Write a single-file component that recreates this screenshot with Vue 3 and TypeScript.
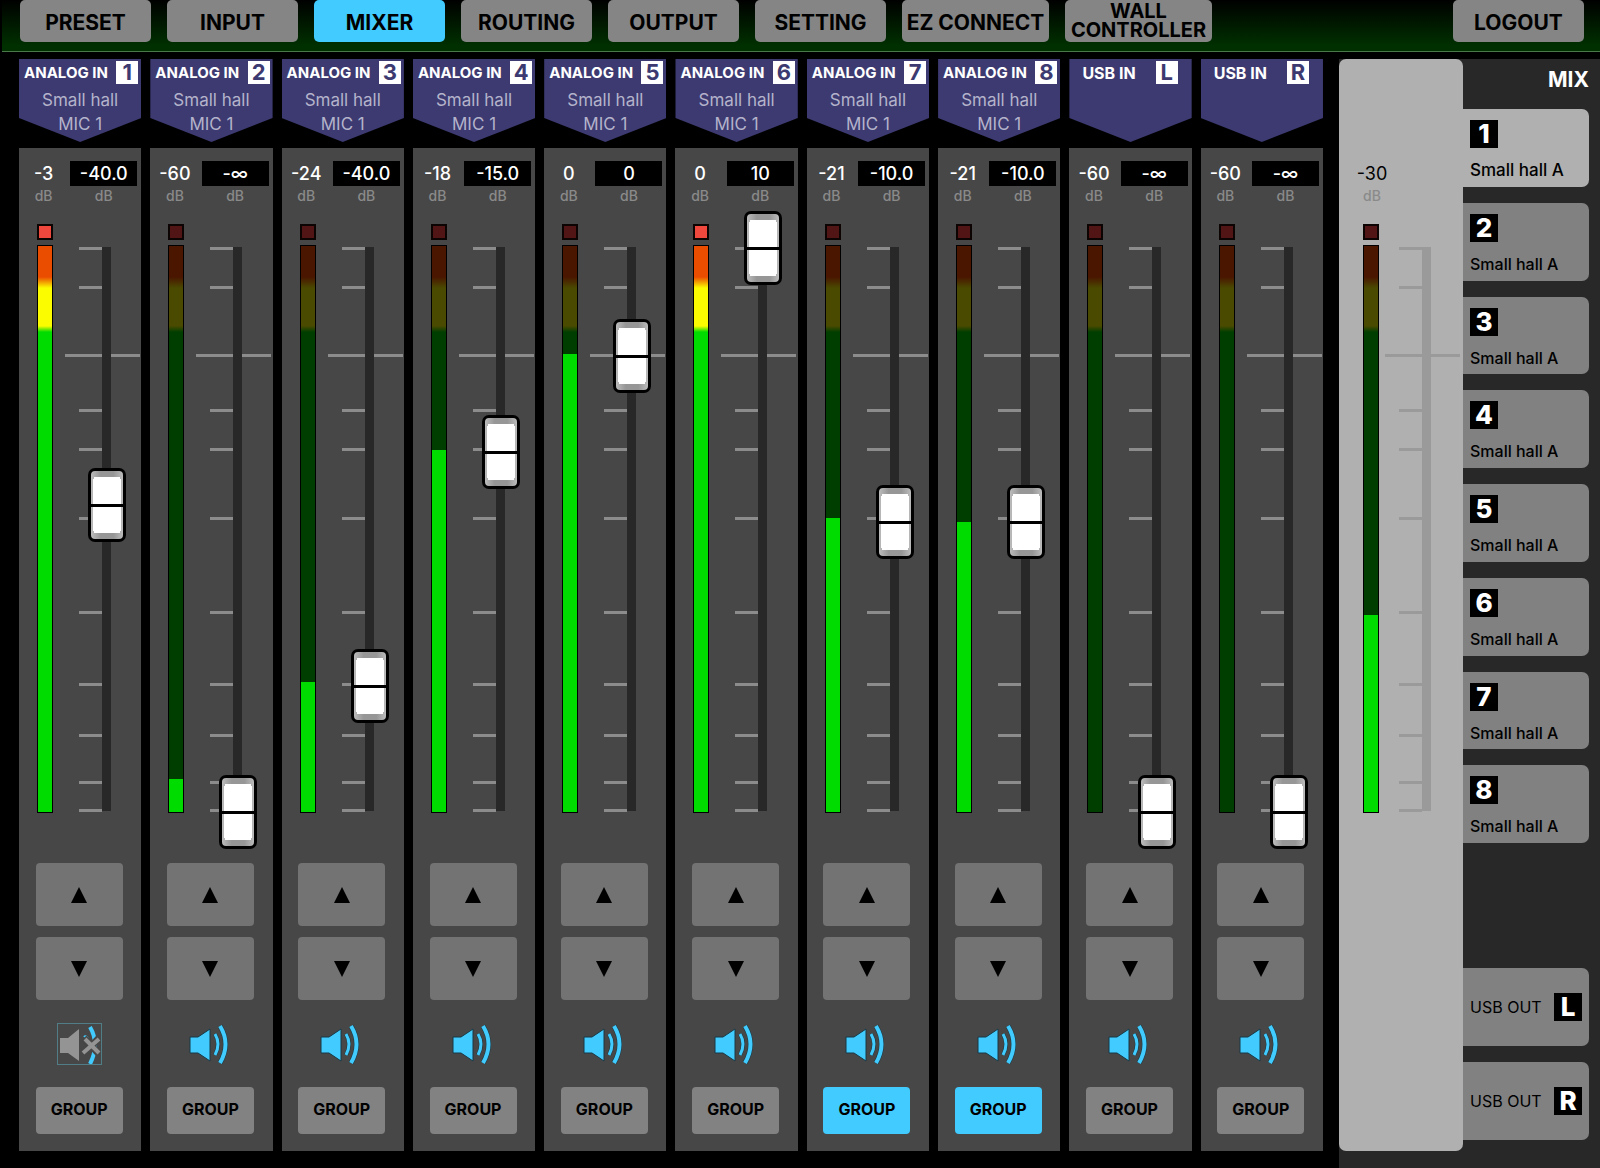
<script setup lang="ts">
import { ref } from 'vue'

interface Channel {
  id: string
  source: string
  badge: string
  name: string
  port: string
  level: string
  value: string
  clip: boolean
  lit: number
  fader: number
  muted: boolean
  grouped: boolean
}

const METER_HEIGHT = 566
const FADER_TRAVEL = 564

const tabs = [
  { label: 'PRESET', size: '' },
  { label: 'INPUT', size: '' },
  { label: 'MIXER', size: '' },
  { label: 'ROUTING', size: '' },
  { label: 'OUTPUT', size: '' },
  { label: 'SETTING', size: '' },
  { label: 'EZ CONNECT', size: 'wide' },
  { label: 'WALL CONTROLLER', size: 'wide two-line' },
]
const activeTab = ref('MIXER')

function analog(n: number, level: string, value: string, lit: number, fader: number, extra: Partial<Channel> = {}): Channel {
  return {
    id: `analog-${n}`, source: 'ANALOG IN', badge: String(n), name: 'Small hall', port: 'MIC 1',
    level, value, lit, fader, clip: false, muted: false, grouped: false, ...extra,
  }
}

function usb(side: string): Channel {
  return {
    id: `usb-${side}`, source: 'USB IN', badge: side, name: '', port: '',
    level: '-60', value: '-∞', lit: 0, fader: 0, clip: false, muted: false, grouped: false,
  }
}

const channels = ref<Channel[]>([
  analog(1, '-3', '-40.0', METER_HEIGHT, 307, { clip: true, muted: true }),
  analog(2, '-60', '-∞', 33, 0),
  analog(3, '-24', '-40.0', 130, 126),
  analog(4, '-18', '-15.0', 362, 360),
  analog(5, '0', '0', 458, 456),
  analog(6, '0', '10', METER_HEIGHT, 564, { clip: true }),
  analog(7, '-21', '-10.0', 294, 290, { grouped: true }),
  analog(8, '-21', '-10.0', 290, 290, { grouped: true }),
  usb('L'),
  usb('R'),
])

const mixes = [1, 2, 3, 4, 5, 6, 7, 8].map((n) => ({ n, name: 'Small hall A' }))
const activeMix = ref(1)
const outputs = ['L', 'R']

const shortTicks = [36, 75, 198, 237, 306, 400, 472, 523, 570, 598]

function nudge(ch: Channel, step: number) {
  ch.fader = Math.min(FADER_TRAVEL, Math.max(0, ch.fader + step))
}
</script>

<template>
  <div class="mixer">
    <header class="topbar">
      <nav class="tabs" aria-label="Sections">
        <button
          v-for="tab in tabs"
          :key="tab.label"
          type="button"
          class="tab"
          :class="[tab.size, { active: tab.label === activeTab }]"
          @click="activeTab = tab.label"
        >{{ tab.label }}</button>
      </nav>
      <button type="button" class="tab">LOGOUT</button>
    </header>

    <main class="desk">
      <section class="channels">
        <article v-for="ch in channels" :key="ch.id" class="channel">
          <div class="plate">
            <h2 class="plate-title" :class="{ usb: !ch.name }">
              <span>{{ ch.source }}</span>
              <span class="plate-badge">{{ ch.badge }}</span>
            </h2>
            <p class="plate-line">{{ ch.name }}</p>
            <p class="plate-line">{{ ch.port }}</p>
          </div>

          <div class="card">
            <div class="readouts">
              <span class="level">{{ ch.level }}</span>
              <input v-model="ch.value" class="value" type="text" :aria-label="`${ch.source} ${ch.badge} gain`" />
              <span class="unit">dB</span>
              <span class="unit">dB</span>
            </div>

            <div class="strip">
              <div class="meter-col">
                <div class="clip" :class="{ on: ch.clip }"></div>
                <div class="meter">
                  <div class="lit" :style="{ height: ch.lit + 'px' }"></div>
                </div>
              </div>
              <div class="fader">
                <svg class="scale" width="75" height="638" viewBox="0 0 75 638" aria-hidden="true">
                  <rect class="track" x="37" y="36" width="9" height="564" />
                  <rect v-for="y in shortTicks" :key="y" x="14" :y="y" width="23" height="3" />
                  <rect x="0" y="143" width="37" height="3" />
                  <rect x="46" y="143" width="29" height="3" />
                </svg>
                <input
                  v-model.number="ch.fader"
                  class="slider"
                  type="range"
                  min="0"
                  :max="FADER_TRAVEL"
                  :aria-label="`${ch.source} ${ch.badge} fader`"
                />
              </div>
            </div>

            <div class="controls">
              <button type="button" class="step" aria-label="Up" @click="nudge(ch, 6)">
                <svg width="16" height="16" viewBox="0 0 16 16"><path d="M8 0 16 16H0z" /></svg>
              </button>
              <button type="button" class="step" aria-label="Down" @click="nudge(ch, -6)">
                <svg width="16" height="16" viewBox="0 0 16 16"><path d="M0 0H16L8 16z" /></svg>
              </button>
              <button type="button" class="mute" :class="{ muted: ch.muted }" aria-label="Mute" @click="ch.muted = !ch.muted">
                <svg v-if="ch.muted" width="45" height="42" viewBox="0 0 45 42">
                  <path d="M3 15H11L22 6V38L11 30H3z" fill="#949494" />
                  <path d="M33 4Q43 21 33 41" fill="none" stroke="#41cbff" stroke-width="4" />
                  <path d="M27 14Q29 12 31 16" fill="none" stroke="#41cbff" stroke-width="2" />
                  <path d="M27 15 42 31M42 15 27 31" fill="none" stroke="#474747" stroke-width="7" />
                  <path d="M28 16 42 30M42 16 26 30" fill="none" stroke="#949494" stroke-width="4" />
                </svg>
                <svg v-else width="45" height="42" viewBox="0 0 45 42">
                  <path d="M2 14H10L22 6V38L10 30H2z" fill="#41cbff" stroke="#183944" />
                  <path d="M27 11Q33 21 27 32" fill="none" stroke="#183944" stroke-width="4" />
                  <path d="M27 11Q33 21 27 32" fill="none" stroke="#41cbff" stroke-width="3" />
                  <path d="M32 3Q43 21 32 40" fill="none" stroke="#183944" stroke-width="5" />
                  <path d="M32 3Q43 21 32 40" fill="none" stroke="#41cbff" stroke-width="4" />
                </svg>
              </button>
              <button
                type="button"
                class="group"
                :class="{ active: ch.grouped }"
                :aria-pressed="ch.grouped"
                @click="ch.grouped = !ch.grouped"
              >GROUP</button>
            </div>
          </div>
        </article>
      </section>

      <aside class="side">
        <section class="mix-panel">
          <div class="readouts">
            <span class="level">-30</span>
            <span class="unit">dB</span>
          </div>
          <div class="strip">
            <div class="meter-col">
              <div class="clip"></div>
              <div class="meter"><div class="lit mix-lit"></div></div>
            </div>
            <svg class="scale" width="75" height="638" viewBox="0 0 75 638" aria-hidden="true">
              <rect class="track" x="37" y="36" width="9" height="564" />
              <rect v-for="y in shortTicks" :key="y" x="14" :y="y" width="23" height="3" />
              <rect x="0" y="143" width="37" height="3" />
              <rect x="46" y="143" width="29" height="3" />
            </svg>
          </div>
        </section>

        <nav class="buses" aria-label="Mixes">
          <h2 class="buses-title">MIX</h2>
          <div class="mix-list">
            <button
              v-for="mix in mixes"
              :key="mix.n"
              type="button"
              class="bus"
              :class="{ active: mix.n === activeMix }"
              @click="activeMix = mix.n"
            >
              <span class="bus-badge">{{ mix.n }}</span>
              <span class="bus-name">{{ mix.name }}</span>
            </button>
          </div>
          <div class="usb-list">
            <button v-for="side in outputs" :key="side" type="button" class="bus usb-bus">
              <span>USB OUT</span>
              <span class="bus-badge">{{ side }}</span>
            </button>
          </div>
        </nav>
      </aside>
    </main>
  </div>
</template>

<style>
body {
  margin: 0;
  background: #000;
}
</style>

<style scoped>
.mixer {
  display: flex;
  flex-direction: column;
  min-height: 100vh;
  background: #000;
  color: #fff;
  font-family: Inter, Roboto, "Liberation Sans", sans-serif;
}

.mixer *,
.mixer {
  box-sizing: border-box;
}

button,
input {
  margin: 0;
  padding: 0;
  border: 0;
  font-family: inherit;
}

button {
  cursor: pointer;
}

h2,
p {
  margin: 0;
}

/* Top bar */
.topbar {
  display: flex;
  justify-content: space-between;
  align-items: flex-start;
  height: 52px;
  margin-left: 2px;
  padding: 0 16px 0 18px;
  border-bottom: 1px solid #4b7849;
  background: linear-gradient(#000, #003000 90%);
}

.tabs {
  display: flex;
  gap: 16px;
}

.tab {
  width: 131px;
  height: 42px;
  padding-top: 2px;
  border-radius: 5px;
  background: #858585;
  color: #000;
  font-size: 21px;
  font-weight: 700;
  line-height: 19px;
}

.tab.wide {
  width: 147px;
}

.tab.two-line {
  padding-top: 0;
  font-size: 20px;
}

.tab.active,
.group.active {
  background: #41cbff;
}

/* Channels */
.desk {
  display: flex;
  flex: 1;
  margin-top: 7px;
}

.channels {
  display: flex;
  flex: 1;
  align-items: flex-start;
  gap: 9px;
  padding: 0 16px 17px 19px;
}

.channel {
  flex: 1;
  min-width: 0;
}

.plate {
  height: 83px;
  padding-top: 2px;
  background: #3c3a70;
  clip-path: polygon(0 0, 100% 0, 100% 59px, 50% 100%, 0 59px);
}

.plate-title {
  display: flex;
  justify-content: space-between;
  align-items: center;
  height: 23px;
  margin-bottom: 2px;
  padding: 0 3px 0 5px;
  font-size: 15px;
  font-weight: 700;
  white-space: nowrap;
}

.plate-title.usb {
  padding: 0 14px 0 13px;
  font-size: 16px;
}

.plate-badge {
  width: 22px;
  height: 23px;
  background: #fff;
  color: #3c3a70;
  font-size: 22px;
  line-height: 23px;
  text-align: center;
}

.plate-line {
  height: 24px;
  padding-top: 3px;
  color: #b4b3cb;
  font-size: 17px;
  line-height: 23px;
  text-align: center;
}

.card {
  margin-top: 6px;
  padding: 13px 0 17px;
  background: #474747;
}

.readouts {
  display: grid;
  grid-template-columns: 1fr 67px;
  grid-template-rows: 25px 18px;
  column-gap: 2px;
  margin-bottom: 7px;
  padding-right: 4px;
  text-align: center;
}

.level,
.value {
  font-size: 18px;
  font-weight: 500;
  line-height: 25px;
}

.value {
  width: 67px;
  height: 25px;
  background: #000;
  color: #fff;
  text-align: center;
}

.unit {
  color: #8a8a8a;
  font-size: 14px;
  font-weight: 500;
  line-height: 20px;
}

.strip {
  display: flex;
  gap: 12px;
  padding-left: 18px;
}

.meter-col {
  flex: none;
  width: 16px;
  padding-top: 13px;
}

.clip {
  height: 16px;
  margin-bottom: 5px;
  border: 2px solid #0c0303;
  background: #511515;
}

.clip.on {
  background: #f0483c;
}

.meter {
  display: flex;
  align-items: flex-end;
  height: 568px;
  border: 1px solid #000;
  background: linear-gradient(#4a1600 31px, #4a4a00 42px, #4a4a00 80px, #003e00 86px);
}

.lit {
  width: 100%;
  background: linear-gradient(#ea4c00 31px, #fcfc00 42px, #fcfc00 80px, #00dc00 86px) bottom / 100% 566px no-repeat;
}

.mix-lit {
  height: 197px;
}

.fader {
  position: relative;
}

.scale {
  display: block;
  fill: #8c8c8c;
}

.track {
  fill: #282828;
}

.slider {
  position: absolute;
  top: 0;
  left: 23px;
  width: 38px;
  height: 638px;
  appearance: none;
  background: transparent;
  writing-mode: vertical-lr;
  direction: rtl;
}

.slider::-webkit-slider-thumb {
  appearance: none;
  box-sizing: border-box;
  width: 38px;
  height: 74px;
  border: 3px solid #000;
  border-radius: 7px;
  background:
    linear-gradient(#000, #000) center / 100% 3px no-repeat,
    linear-gradient(#fff, #fff) center / 28px 52px no-repeat,
    linear-gradient(#fff, #fff) center / 26px 56px no-repeat,
    linear-gradient(90deg, #bcbcbc, #969696 30%, #969696 70%, #bcbcbc);
}

/* Channel buttons */
.controls {
  display: flex;
  flex-direction: column;
  align-items: center;
  padding: 14px 2px 0 0;
}

.step {
  display: flex;
  align-items: center;
  justify-content: center;
  width: 87px;
  height: 63px;
  margin-bottom: 11px;
  border-radius: 4px;
  background: #737373;
}

.mute {
  width: 45px;
  height: 42px;
  margin: 12px 0 22px;
  background: transparent;
}

.mute.muted {
  outline: 1px solid #507d86;
  outline-offset: -1px;
}

.mute svg {
  display: block;
}

.group {
  width: 87px;
  height: 47px;
  padding-bottom: 3px;
  border-radius: 4px;
  background: #828282;
  color: #000;
  font-size: 16px;
  font-weight: 700;
}

/* Mix side */
.side {
  display: flex;
  flex: none;
  width: 261px;
  background: #282828;
}

.mix-panel {
  width: 124px;
  margin-bottom: 17px;
  padding-top: 102px;
  border-radius: 7px;
  background: #b0b0b0;
  color: #000;
}

.mix-panel .readouts {
  grid-template-columns: 66px;
}

.mix-panel .level {
  font-weight: 400;
}

.mix-panel .strip {
  gap: 6px;
  padding-left: 24px;
}

.mix-panel .scale,
.mix-panel .track {
  fill: #9a9a9a;
}

.buses {
  display: flex;
  flex: 1;
  flex-direction: column;
  padding: 0 11px 28px 0;
}

.buses-title {
  height: 50px;
  font-size: 21px;
  font-weight: 700;
  line-height: 42px;
  text-align: right;
}

.mix-list {
  display: flex;
  flex-direction: column;
  gap: 16px;
  height: 734px;
}

.usb-list {
  display: flex;
  flex-direction: column;
  gap: 16px;
  margin-top: auto;
}

.bus {
  display: flex;
  flex: 1;
  flex-direction: column;
  align-items: flex-start;
  gap: 12px;
  padding: 11px 7px 0;
  border-radius: 0 7px 7px 0;
  background: #818181;
  color: #000;
  font-size: 16px;
  font-weight: 500;
  line-height: 20px;
}

.bus.active {
  background: #b0b0b0;
  font-size: 17px;
}

.bus-badge {
  flex: none;
  width: 28px;
  height: 28px;
  background: #000;
  color: #fff;
  font-size: 26px;
  font-weight: 800;
  line-height: 28px;
  text-align: center;
}

.usb-bus {
  flex: none;
  flex-direction: row;
  align-items: center;
  justify-content: space-between;
  height: 78px;
  padding: 0 7px;
  font-weight: 400;
}
</style>
